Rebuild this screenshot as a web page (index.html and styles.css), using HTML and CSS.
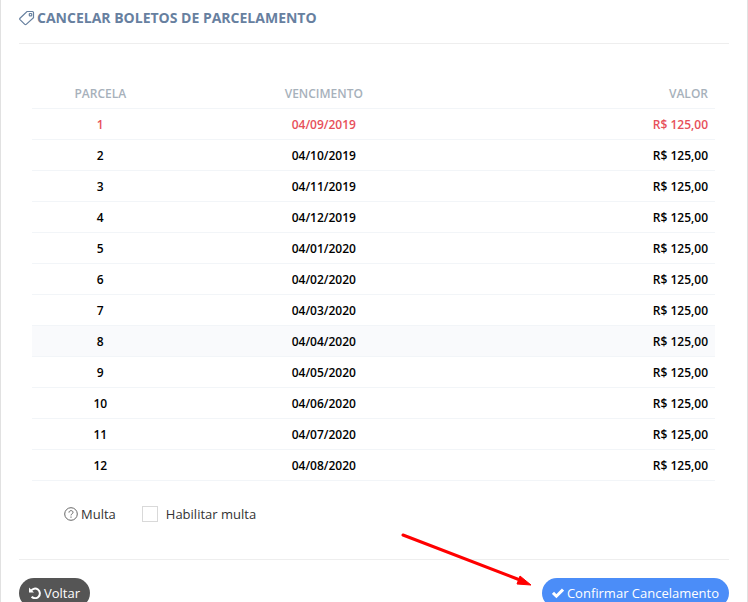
FILE: index.html
```
<!DOCTYPE html>
<html lang="pt-BR">
<head>
    <meta charset="UTF-8">
    <meta name="viewport" content="width=device-width, initial-scale=1.0">
    <title>Cancelar boletos de parcelamento</title>
    <link rel="stylesheet" href="styles.css">
</head>
<body>
    <div class="portlet">
        <div class="portlet-title">
            <svg class="icon-tag" viewBox="0 0 16 16" width="16" height="16" fill="none" stroke="currentColor" stroke-width="1.2" aria-hidden="true">
                <path d="M8 1.500h5.500q1 0 1 1v5.200l-7.300 6.700q-.7.600-1.400 0L1 9.600q-.6-.7 0-1.400z"/>
                <rect x="10.300" y="3.500" width="2.400" height="2.400" rx=".6"/>
            </svg>
            <h1>CANCELAR BOLETOS DE PARCELAMENTO</h1>
        </div>

        <form class="portlet-body">
            <table class="parcelas">
                <thead>
                    <tr><th class="col-parcela">PARCELA</th><th>VENCIMENTO</th><th class="col-valor">VALOR</th></tr>
                </thead>
                <tbody>
                    <tr class="vencida"><td>1</td><td>04/09/2019</td><td class="col-valor">R$ 125,00</td></tr>
                    <tr><td>2</td><td>04/10/2019</td><td class="col-valor">R$ 125,00</td></tr>
                    <tr><td>3</td><td>04/11/2019</td><td class="col-valor">R$ 125,00</td></tr>
                    <tr><td>4</td><td>04/12/2019</td><td class="col-valor">R$ 125,00</td></tr>
                    <tr><td>5</td><td>04/01/2020</td><td class="col-valor">R$ 125,00</td></tr>
                    <tr><td>6</td><td>04/02/2020</td><td class="col-valor">R$ 125,00</td></tr>
                    <tr><td>7</td><td>04/03/2020</td><td class="col-valor">R$ 125,00</td></tr>
                    <tr class="ativa"><td>8</td><td>04/04/2020</td><td class="col-valor">R$ 125,00</td></tr>
                    <tr><td>9</td><td>04/05/2020</td><td class="col-valor">R$ 125,00</td></tr>
                    <tr><td>10</td><td>04/06/2020</td><td class="col-valor">R$ 125,00</td></tr>
                    <tr><td>11</td><td>04/07/2020</td><td class="col-valor">R$ 125,00</td></tr>
                    <tr><td>12</td><td>04/08/2020</td><td class="col-valor">R$ 125,00</td></tr>
                </tbody>
            </table>

            <div class="multa">
                <span class="multa-titulo">
                    <svg viewBox="0 0 14 14" width="14" height="14" fill="none" stroke="currentColor" aria-hidden="true">
                        <circle cx="7" cy="7" r="6.300"/>
                        <path d="M5 5.600C5 3 9 3 9 5.400 9 6.800 7 6.800 7 8.400M7 9.500v1.300"/>
                    </svg>
                    Multa
                </span>
                <label class="multa-opcao" for="habilitarMulta">
                    <input type="checkbox" id="habilitarMulta">
                    Habilitar multa
                </label>
            </div>
        </form>

        <div class="acoes">
            <button type="button" class="btn btn-voltar">
                <svg viewBox="0 0 12 12" width="12" height="12" fill="none" stroke="currentColor" stroke-width="2" aria-hidden="true">
                    <path d="M2 3.800A4.800 4.800 0 1 1 2.600 9.700"/>
                    <path d="M0 .5v5h5z" fill="currentColor" stroke="none"/>
                </svg>
                Voltar
            </button>
            <button type="button" class="btn btn-confirmar">
                <svg viewBox="0 0 12 12" width="12" height="12" fill="none" stroke="currentColor" stroke-width="3" aria-hidden="true">
                    <path d="M1 5.800l3.400 3.400L11 2.600"/>
                </svg>
                Confirmar Cancelamento
            </button>
            <!-- seta que aponta para o botão de confirmação -->
            <svg class="seta" viewBox="0 0 132 56" width="132" height="56" aria-hidden="true">
                <path d="M3 4L120 49" fill="none" stroke="#f00" stroke-width="3" stroke-linecap="round"/>
                <path d="M131 54l-11-9-3 8z" fill="#f00" stroke="#f00"/>
            </svg>
        </div>
    </div>
</body>
</html>
```

FILE: styles.css
```
* { box-sizing: border-box; }
body { margin: 0; background: #fff; color: #333; font-family: "Open Sans", sans-serif; font-size: 13px; line-height: 20px; }
.portlet { padding: 0 18px 20px; border: 1px solid #e1e1e1; border-top: none; }

.portlet-title { display: flex; align-items: center; gap: 2px; height: 44px; padding-bottom: 8px; border-bottom: 1px solid #eee; color: #67809f; }
.portlet-title h1 { margin: 0; font-size: 14px; font-weight: 700; }

.portlet-body { padding: 33px 14px 35px 13px; }
.parcelas { width: 100%; table-layout: fixed; border-collapse: collapse; font-size: 12px; font-weight: 600; color: #000; text-align: center; }
.parcelas th, .parcelas td { height: 31px; padding: 2px 7px 0; border-bottom: 1px solid #f2f5f8; }
.parcelas th { padding-top: 4px; color: #a7b1bb; font-weight: 600; }
.parcelas .col-parcela { width: 20%; }
.parcelas .col-valor { width: 236px; text-align: right; }
.parcelas .vencida { color: #e7505a; }
.parcelas .ativa, .parcelas tbody tr:hover { background: #f9fafc; }

.multa { display: flex; align-items: center; gap: 26px; padding: 23px 32px 0; }
.multa-titulo { display: flex; align-items: center; gap: 3px; }
.multa-titulo svg { color: #666; }
.multa-opcao { display: flex; align-items: center; gap: 8px; cursor: pointer; }
.multa-opcao input { appearance: none; width: 16px; height: 16px; margin: 0; border: 1px solid #d9d9d9; background: #fff; }
.multa-opcao input:checked { background: #4b8df8; }

.acoes { position: relative; display: flex; justify-content: space-between; padding-top: 18px; border-top: 1px solid #eee; }
.btn { display: flex; align-items: center; gap: 3px; padding: 5px 10px; border: none; border-radius: 16px; color: #fff; font-family: inherit; font-size: 13px; line-height: 20px; cursor: pointer; }
.btn-voltar { background: #555; }
.btn-confirmar { background: #4b8df8; }
.seta { position: absolute; right: 197px; top: -29px; pointer-events: none; }
```
